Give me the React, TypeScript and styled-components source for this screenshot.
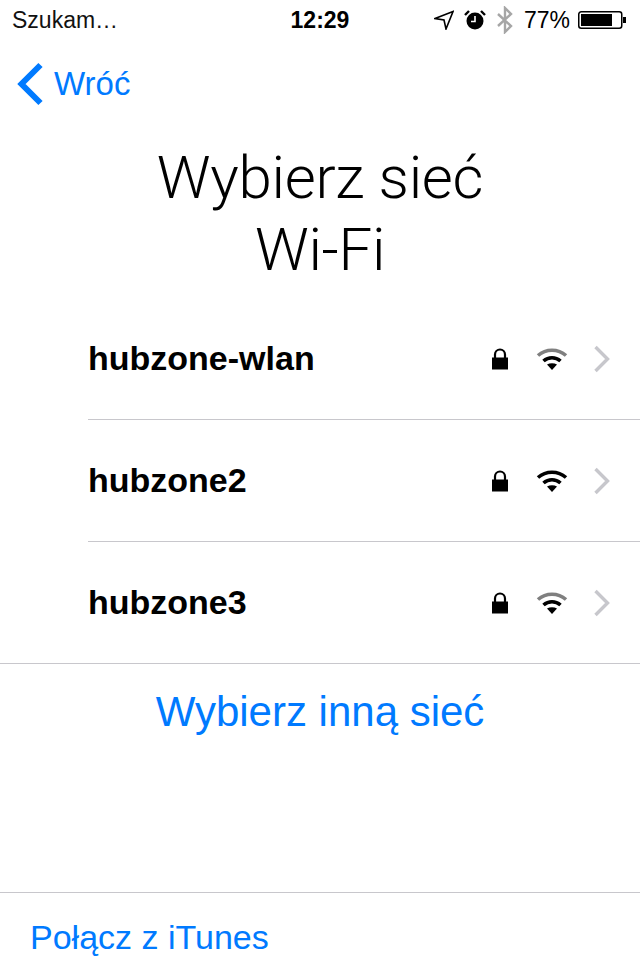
import { createGlobalStyle } from "styled-components";
import styled from "styled-components";

const GlobalStyle = createGlobalStyle`
  html, body {
    margin: 0;
    padding: 0;
    background: #fff;
  }
`;

const Screen = styled.div`
  width: 640px;
  height: 960px;
  display: flex;
  flex-direction: column;
  overflow: hidden;
  background: #fff;
  color: #000;
  font-family: "Liberation Sans", Arial, sans-serif;
`;

const StatusBar = styled.div`
  height: 40px;
  padding: 0 14px 0 12px;
  display: flex;
  align-items: center;
  justify-content: space-between;
  position: relative;
  font-size: 23px;
`;

const Carrier = styled.span`
  color: #111;
`;

const Clock = styled.span`
  position: absolute;
  left: 0;
  right: 0;
  text-align: center;
  font-weight: 700;
  font-size: 23px;
`;

const StatusRight = styled.div`
  display: flex;
  align-items: center;
  gap: 10px;
`;

const BackRow = styled.div`
  height: 88px;
  padding-left: 16px;
  display: flex;
  align-items: center;
  gap: 9px;
  color: #007aff;
  font-size: 33px;
`;

const Title = styled.h1`
  margin: 0;
  height: 170px;
  padding-top: 14px;
  box-sizing: border-box;
  text-align: center;
  font-family: Roboto, "Liberation Sans", sans-serif;
  font-weight: 300;
  font-size: 60px;
  line-height: 72px;
  letter-spacing: -0.3px;
`;

const NetworkList = styled.div`
  display: flex;
  flex-direction: column;
  border-bottom: 1px solid #c8c7cc;
`;

const NetworkRow = styled.div`
  height: 122px;
  margin-left: 88px;
  padding-right: 29px;
  box-sizing: border-box;
  display: flex;
  align-items: center;
  border-bottom: 1px solid #c8c7cc;

  &:last-child {
    border-bottom: none;
    height: 121px;
  }
`;

const NetworkName = styled.span`
  flex: 1;
  font-weight: 700;
  font-size: 34px;
`;

const RowIcons = styled.div`
  display: flex;
  align-items: center;
`;

const OtherNetwork = styled.div`
  height: 229px;
  padding-top: 21px;
  box-sizing: border-box;
  text-align: center;
  color: #007aff;
  font-size: 42px;
  line-height: 54px;
  border-bottom: 1px solid #c8c7cc;
`;

const ItunesLink = styled.div`
  padding: 22px 0 0 30px;
  color: #007aff;
  font-size: 34px;
  line-height: 44px;
`;

const LockSvg = styled.svg`
  display: block;
  margin-right: 27px;
`;

const WifiSvg = styled.svg`
  display: block;
  margin-right: 25px;
`;

const Lock = () => (
  <LockSvg width="18" height="22" viewBox="0 0 18 22">
    <path d="M4 10V6.5a5 5 0 0 1 10 0V10" fill="none" stroke="#000" strokeWidth="2.2" />
    <rect x="1" y="9.5" width="16" height="12" fill="#000" />
  </LockSvg>
);

const Wifi = ({ outer }: { outer: string }) => (
  <WifiSvg width="32" height="24" viewBox="0 0 32 24">
    <path d="M2 8.5C10 1.5 22 1.5 30 8.5" fill="none" stroke={outer} strokeWidth="3.6" />
    <path d="M7.5 14C12.5 9.6 19.5 9.6 24.5 14" fill="none" stroke="#000" strokeWidth="3.6" />
    <path d="M11 17.5C14 15.8 18 15.8 21 17.5L16 23Z" fill="#000" />
  </WifiSvg>
);

const Chevron = () => (
  <svg width="18" height="28" viewBox="0 0 18 28" style={{ display: "block" }}>
    <path d="M2.5 2L14.5 14L2.5 26" fill="none" stroke="#c7c7cc" strokeWidth="3.4" />
  </svg>
);

const networks = [
  { name: "hubzone-wlan", outer: "#7f7f7f" },
  { name: "hubzone2", outer: "#000" },
  { name: "hubzone3", outer: "#7f7f7f" },
];

export default function App() {
  return (
    <Screen>
      <GlobalStyle />
      <StatusBar>
        <Carrier>Szukam…</Carrier>
        <Clock>12:29</Clock>
        <StatusRight>
          <svg width="20" height="20" viewBox="0 0 20 20">
            <path d="M1 8.5L19 1.5L12 19L10 10Z" fill="none" stroke="#000" strokeWidth="1.6" strokeLinejoin="miter" />
          </svg>
          <svg width="22" height="22" viewBox="0 0 22 22">
            <circle cx="11" cy="12" r="8.5" fill="#000" />
            <path d="M11 7V12.5H7" fill="none" stroke="#fff" strokeWidth="1.6" />
            <path d="M1 6L5 2M21 6L17 2" stroke="#000" strokeWidth="2.4" />
          </svg>
          <svg width="18" height="28" viewBox="0 0 18 28">
            <path d="M2 8L15 20L9 26V2L15 8L2 20" fill="none" stroke="#a6a6a6" strokeWidth="2.4" />
          </svg>
          <span>77%</span>
          <svg width="48" height="20" viewBox="0 0 48 20" style={{ marginLeft: -2 }}>
            <rect x="0.75" y="1.75" width="43" height="16.5" rx="2.5" fill="none" stroke="#000" strokeWidth="1.5" />
            <rect x="3" y="4" width="31" height="12" fill="#000" />
            <rect x="45" y="7" width="3" height="6" fill="#000" />
          </svg>
        </StatusRight>
      </StatusBar>
      <BackRow>
        <svg width="29" height="44" viewBox="0 0 29 44">
          <path d="M24.5 3L5.5 22L24.5 41" fill="none" stroke="#007aff" strokeWidth="6" />
        </svg>
        <span>Wróć</span>
      </BackRow>
      <Title>
        Wybierz sieć
        <br />
        Wi-Fi
      </Title>
      <NetworkList>
        {networks.map((n) => (
          <NetworkRow key={n.name}>
            <NetworkName>{n.name}</NetworkName>
            <RowIcons>
              <Lock />
              <Wifi outer={n.outer} />
              <Chevron />
            </RowIcons>
          </NetworkRow>
        ))}
      </NetworkList>
      <OtherNetwork>Wybierz inną sieć</OtherNetwork>
      <ItunesLink>Połącz z iTunes</ItunesLink>
    </Screen>
  );
}
